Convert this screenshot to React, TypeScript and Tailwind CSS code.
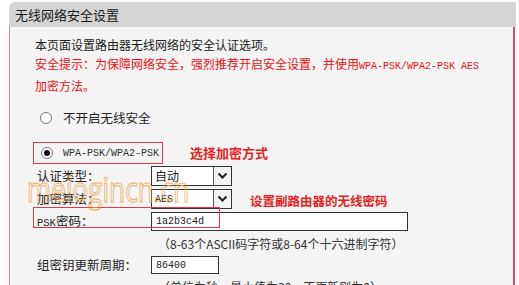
import React from "react";

const cjk = { fontFamily: '"Noto Sans CJK SC", "Noto Sans", sans-serif' };
const mono = { fontFamily: '"Liberation Mono", "DejaVu Sans Mono", monospace' };

function Chevron() {
  return (
    <svg width="11" height="8" viewBox="0 0 11 8">
      <polyline points="1.5,1.5 5.5,5.5 9.5,1.5" fill="none" stroke="#222" strokeWidth="2" />
    </svg>
  );
}

function Select({ value, isMono }: { value: string; isMono?: boolean }) {
  return (
    <div className="flex h-[20px] w-[81px] border border-[#333] bg-white">
      <div
        className={"flex flex-1 items-center pl-[3px] " + (isMono ? "text-[10px]" : "text-[12px]")}
        style={isMono ? mono : cjk}
      >
        {value}
      </div>
      <div className="flex w-[18px] items-center justify-center border-l border-[#555] bg-[#f3f3f3]">
        <Chevron />
      </div>
    </div>
  );
}

function Radio({ checked }: { checked?: boolean }) {
  return (
    <div className="flex h-[12px] w-[12px] items-center justify-center rounded-full border border-[#777] bg-white">
      {checked && <div className="h-[6px] w-[6px] rounded-full bg-[#111]" />}
    </div>
  );
}

export default function App() {
  return (
    <div className="relative h-[285px] w-[519px] overflow-hidden bg-white text-[#222]" style={cjk}>
      <div className="ml-[9px] mt-[2px] w-[507px]">
        <div className="flex h-[25px] items-center rounded-tl-[6px] bg-[#d4d4d4] pl-[6px] text-[13px] text-[#1a1a1a]">
          无线网络安全设置
        </div>
        <div className="h-[260px] w-[506px] border-l border-r-2 border-l-[#e8808f] border-r-[#d45068] bg-[#f4f4f4] pl-[25px]">
          <div className="pt-[8px] text-[12px] leading-[19px]">
            <div className="text-[#222]">本页面设置路由器无线网络的安全认证选项。</div>
            <div className="text-[#f01010]">
              安全提示：为保障网络安全，强烈推荐开启安全设置，并使用
              <span className="text-[10px]" style={mono}>WPA-PSK/WPA2-PSK AES</span>
            </div>
            <div className="text-[#f01010]">加密方法。</div>
          </div>

          <div className="mt-[13px] flex h-[20px] items-center pl-[5px]">
            <Radio />
            <span className="ml-[11px] text-[12.5px] text-[#222]">不开启无线安全</span>
          </div>

          <div className="ml-[-2px] mt-[14px] flex h-[22px] items-center">
            <div className="flex h-[22px] w-[130px] items-center border border-[#e03848] pl-[7px]">
              <Radio checked />
              <span className="ml-[10px] text-[10px] text-[#333]" style={mono}>
                WPA-PSK/WPA2-PSK
              </span>
            </div>
            <span className="ml-[27px] text-[13px] font-bold text-[#e82020]">选择加密方式</span>
          </div>

          <div className="mt-[2px] flex h-[20px] items-center pl-[2px]">
            <div className="w-[114px] text-[12.5px]">认证类型：</div>
            <Select value="自动" />
          </div>

          <div className="mt-[3px] flex h-[20px] items-center pl-[2px]">
            <div className="w-[114px] text-[12.5px]">加密算法：</div>
            <Select value="AES" isMono />
            <span className="ml-[18px] mt-[4px] text-[12.5px] font-bold text-[#e82020]">
              设置副路由器的无线密码
            </span>
          </div>

          <div className="mt-[3px] flex h-[19px] items-center pl-[2px]">
            <div className="w-[114px] text-[12.5px]">
              <span className="text-[10.5px]" style={mono}>PSK</span>密码：
            </div>
            <div
              className="flex h-[19px] w-[257px] items-center border border-[#333] bg-white pl-[4px] text-[10px] text-[#222]"
              style={mono}
            >
              1a2b3c4d
            </div>
          </div>

          <div className="mt-[4px] pl-[123px] text-[12px] leading-[18px] text-[#333]">
            （8-63个ASCII码字符或8-64个十六进制字符）
          </div>

          <div className="mt-[3px] flex h-[18px] items-center pl-[2px]">
            <div className="w-[114px] text-[12.5px]">组密钥更新周期：</div>
            <div
              className="flex h-[18px] w-[68px] items-center border border-[#333] bg-white pl-[4px] text-[10px] text-[#222]"
              style={mono}
            >
              86400
            </div>
          </div>

          <div className="mt-[4px] pl-[123px] text-[12px] leading-[18px] text-[#333]">
            （单位为秒，最小值为30，不更新则为0）
          </div>
        </div>
      </div>

      {/* annotation box around PSK label + value */}
      <div className="pointer-events-none absolute left-[33px] top-[207px] h-[21px] w-[187px] border border-[#e03848]" />

      {/* watermark */}
      <div
        className="pointer-events-none absolute left-[27px] top-[172px] origin-left scale-x-[0.77] whitespace-nowrap text-[34px] leading-none text-transparent opacity-80 [-webkit-text-stroke:1px_#f0a040]"
        style={{ fontFamily: '"Open Sans", sans-serif' }}
      >
        melogincn.cn
      </div>
    </div>
  );
}
